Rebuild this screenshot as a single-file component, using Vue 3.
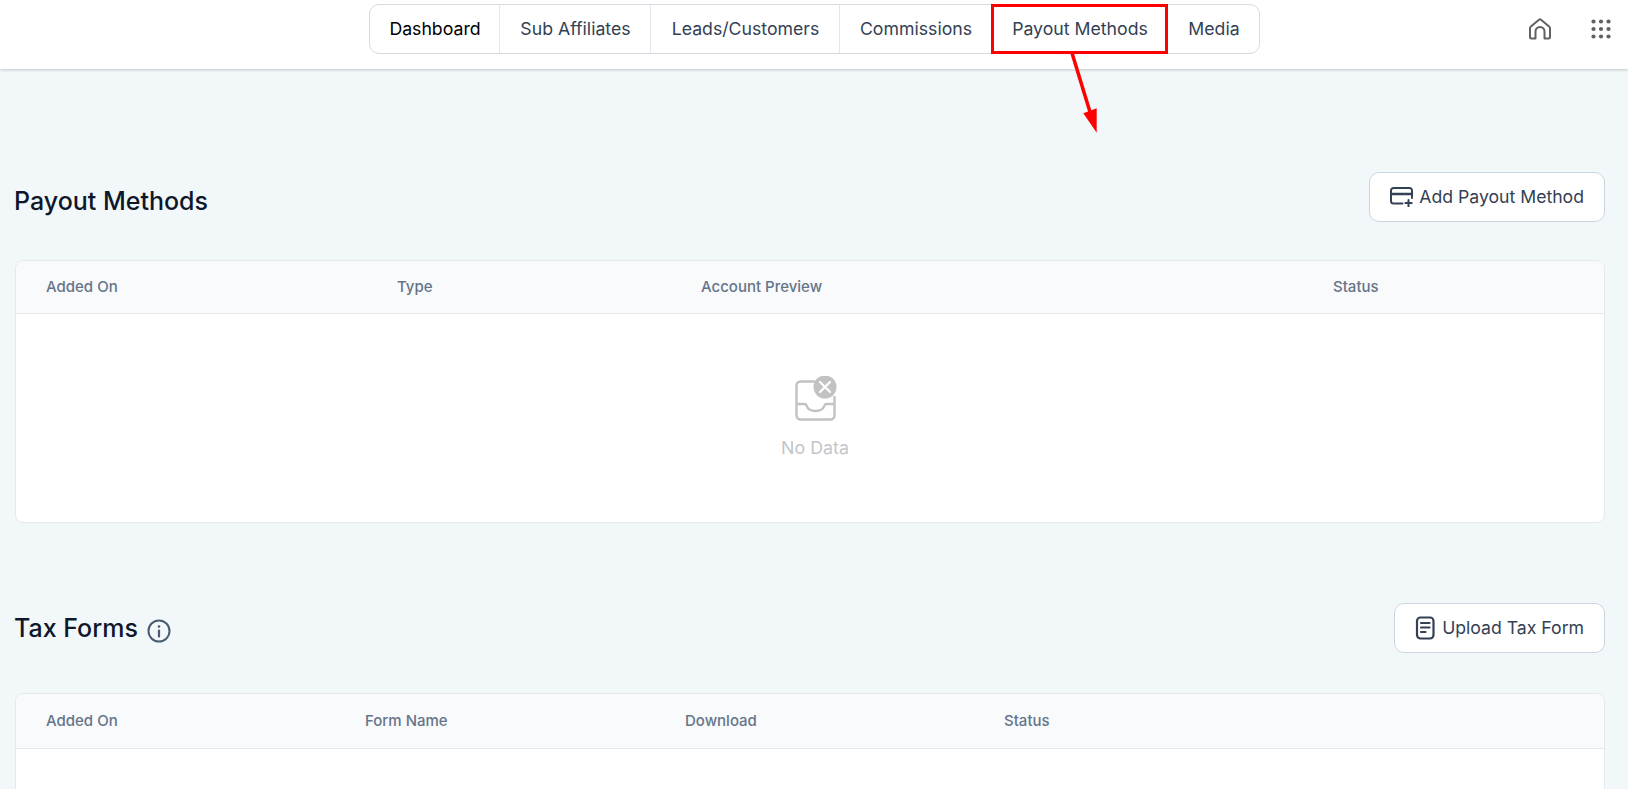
<template>
  <div class="page">
    <header class="topbar">
      <nav class="tabs">
        <a v-for="t in tabs" :key="t.label" class="tab" :class="{ active: t.active }" :style="{ width: t.w + 'px' }">{{ t.label }}</a>
      </nav>
      <div class="top-icons">
        <svg class="home" width="24" height="24" viewBox="0 0 24 24" fill="none" stroke="#616161" stroke-width="2" stroke-linejoin="round" stroke-linecap="round">
          <path d="M2.600 9.700 11 2.700a1.600 1.600 0 0 1 2 0l8.400 7a1.500 1.500 0 0 1 .6 1.200V20a1.500 1.500 0 0 1-1.500 1.500H16.500V14.500a4.500 4.500 0 0 0-9 0V21.500H3.500A1.500 1.500 0 0 1 2 20v-9.100a1.500 1.500 0 0 1 .6-1.200Z"/>
        </svg>
        <svg class="grid" width="20" height="20" viewBox="0 0 20 20" fill="#616161">
          <template v-for="y in [2.500,10,17.500]" :key="y">
            <circle v-for="x in [2.500,10,17.500]" :key="x" :cx="x" :cy="y" r="2.100"/>
          </template>
        </svg>
      </div>
    </header>

    <div class="highlight"></div>
    <svg class="arrow" width="50" height="90" viewBox="0 0 50 90">
      <line x1="4" y1="1" x2="22" y2="60" stroke="#ff0000" stroke-width="3.500"/>
      <polygon points="28.700,80.700 15.300,61.300 28.700,56.300" fill="#ff0000"/>
    </svg>

    <main class="content">
      <section class="block first">
        <div class="block-head">
          <h2>Payout Methods</h2>
          <button class="action narrow">
            <svg width="24" height="20" viewBox="0 0 24 20" fill="none" stroke="#334155" stroke-width="2" stroke-linecap="round" stroke-linejoin="round">
              <path d="M12.500 16.500H3.500A2.500 2.500 0 0 1 1 14V3.500A2.500 2.500 0 0 1 3.500 1h16A2.500 2.500 0 0 1 22 3.500V11"/>
              <path d="M1 7h21" stroke-width="2.400"/>
              <path d="M18.500 13v6.200M15.400 16.100h6.300"/>
            </svg>
            Add Payout Method
          </button>
        </div>
        <div class="table">
          <div class="thead cols-a">
            <span>Added On</span><span>Type</span><span>Account Preview</span><span>Status</span>
          </div>
          <div class="empty">
            <svg width="46" height="46" viewBox="0 0 46 46" fill="none">
              <path d="M20 5.500H5.500a4 4 0 0 0-4 4v30a4 4 0 0 0 4 4h30a4 4 0 0 0 4-4V20" stroke="#c2c2c2" stroke-width="2.400"/>
              <path d="M1.500 28h8c1 0 1.600.5 2 1.500.9 2.900 4 5.500 9 5.500s8.100-2.600 9-5.500c.4-1 1-1.500 2-1.500h8" stroke="#c2c2c2" stroke-width="2.400"/>
              <circle cx="30" cy="11" r="11.500" fill="#c2c2c2"/>
              <path d="M25 6l10 10M35 6 25 16" stroke="#fff" stroke-width="2.200" stroke-linecap="round"/>
            </svg>
            <p>No Data</p>
          </div>
        </div>
      </section>

      <section class="block second">
        <div class="block-head">
          <div class="title-row">
            <h2>Tax Forms</h2>
            <svg width="24" height="24" viewBox="0 0 24 24" fill="none" stroke="#4b5b72" stroke-width="2" stroke-linecap="round">
              <circle cx="12" cy="12" r="10.500"/>
              <path d="M12 11.500v6" stroke-width="2.200"/>
              <circle cx="12" cy="7.500" r=".6" fill="#4b5b72" stroke-width="1.500"/>
            </svg>
          </div>
          <button class="action">
            <svg width="20" height="24" viewBox="0 0 20 24" fill="none" stroke="#334155" stroke-width="2.200" stroke-linecap="round" stroke-linejoin="round">
              <rect x="2" y="1.500" width="16.500" height="21" rx="3.500"/>
              <path d="M6 7h8.500M6 11.500h8.500M6 16h4.500"/>
            </svg>
            Upload Tax Form
          </button>
        </div>
        <div class="table">
          <div class="thead tall cols-b">
            <span>Added On</span><span>Form Name</span><span>Download</span><span>Status</span>
          </div>
          <div class="empty"></div>
        </div>
      </section>
    </main>
  </div>
</template>

<script setup>
const tabs = [
  { label: 'Dashboard', active: true, w: 130 },
  { label: 'Sub Affiliates', w: 151 },
  { label: 'Leads/Customers', w: 189 },
  { label: 'Commissions', w: 152 },
  { label: 'Payout Methods', w: 176 },
  { label: 'Media', w: 91 }
]
</script>

<style>
html, body { margin: 0; height: 100%; overflow: hidden; background: #f2f7fa; }
</style>

<style scoped>
.page {
  position: relative;
  height: 789px;
  overflow: hidden;
  background: #f2f7fa;
  font-family: Inter, "Liberation Sans", sans-serif;
  color: #334155;
}
.topbar {
  height: 69px;
  box-sizing: border-box;
  background: #fff;
  box-shadow: 0 1px 3px rgba(0, 0, 0, .2);
  display: flex;
  justify-content: center;
  padding-top: 4px;
  position: relative;
}
.tabs {
  display: flex;
  height: 50px;
  box-sizing: border-box;
  border: 1px solid #d5dae3;
  border-radius: 10px;
  background: #fff;
}
.tab {
  box-sizing: border-box;
  display: flex;
  align-items: center;
  justify-content: center;
  padding: 0 0 1px 2px;
  font-size: 17.700px;
  color: #334155;
  border-right: 1px solid #e2e6ed;
}
.tab:last-child { border-right: 0; }
.tab.active { color: #000; }
.top-icons {
  position: absolute;
  top: 17px;
  left: 1528px;
  display: flex;
  align-items: center;
  gap: 39px;
}
.highlight {
  position: absolute;
  left: 991px;
  top: 4px;
  width: 177px;
  height: 50px;
  box-sizing: border-box;
  border: 3px solid #ff0000;
}
.arrow {
  position: absolute;
  left: 1068px;
  top: 52px;
}
.content { padding: 0 23px 0 14px; }
.block-head {
  display: flex;
  justify-content: space-between;
  align-items: flex-start;
}
.first { padding-top: 103px; }
.second { padding-top: 80px; }
h2 {
  margin: 0;
  font-size: 25px;
  font-weight: 450;
  line-height: 36px;
  color: #0f172a;
}
.first h2 { padding-top: 11px; }
.title-row {
  display: flex;
  align-items: center;
  gap: 9px;
  padding: 7px 0 0;
}
.title-row svg { margin-top: 5px; }
.action {
  height: 50px;
  box-sizing: border-box;
  padding: 0 20px 1px;
  display: flex;
  align-items: center;
  gap: 7px;
  background: #fff;
  border: 1px solid #cbd5e1;
  border-radius: 10px;
  font-family: inherit;
  font-size: 17.650px;
  color: #334155;
}
.action.narrow { gap: 5px; }
.table {
  margin-left: 1px;
  background: #fff;
  border: 1px solid #e5e9ee;
  border-radius: 8px;
  overflow: hidden;
}
.first .table { margin-top: 38px; }
.second .table { margin-top: 40px; }
.thead {
  height: 53px;
  box-sizing: border-box;
  display: grid;
  align-items: center;
  background: #f8fafc;
  border-bottom: 1px solid #e5e9ee;
  font-size: 15px;
  font-weight: 500;
  color: #667489;
  padding: 0 0 2px 30px;
}
.thead.tall { height: 55px; }
.cols-a { grid-template-columns: 351px 304px 632px 1fr; }
.cols-b { grid-template-columns: 319px 320px 319px 1fr; }
.empty {
  height: 208px;
  display: flex;
  flex-direction: column;
  align-items: center;
  padding: 62px 0 0 10px;
  box-sizing: border-box;
}
.empty svg { margin-left: 6px; }
.empty p {
  margin: 15px 0 0;
  font-size: 17.800px;
  color: #c2c5ca;
}
</style>
